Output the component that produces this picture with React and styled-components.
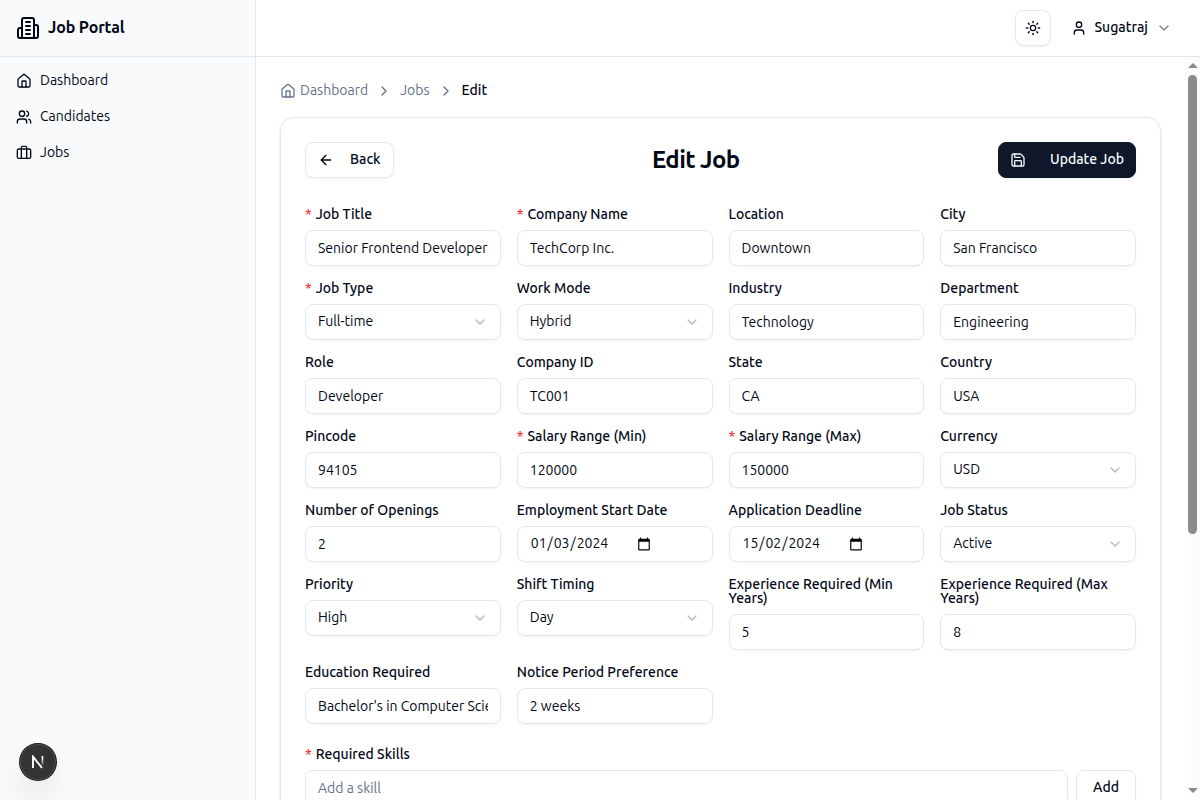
import React from "react";
import styled, { createGlobalStyle, css } from "styled-components";
import {
  House, Users, Briefcase, Sun, User, ChevronDown, ChevronRight, ArrowLeft, Save,
} from "lucide-react";

const line = "#e2e8f0";
const ink = "#020817";
const muted = "#64748b";

const GlobalStyle = createGlobalStyle`
  *, *::before, *::after { box-sizing: border-box; }
  body {
    margin: 0;
    overflow: hidden;
    background: #fff;
    color: ${ink};
    font-family: Ubuntu, "Noto Sans", sans-serif;
    font-size: 14px;
    line-height: 20px;
  }
`;

const Shell = styled.div`
  display: grid;
  grid-template-columns: 256px minmax(0, 1fr);
  height: 800px;
  overflow: hidden;
`;

const Sidebar = styled.aside`
  border-right: 1px solid ${line};
  background: #f8fafc;
`;

const Brand = styled.div`
  display: flex;
  align-items: center;
  gap: 8px;
  height: 57px;
  padding: 0 16px;
  border-bottom: 1px solid ${line};
  font-size: 16px;
  font-weight: 600;
  letter-spacing: -0.12px;
  line-height: 24px;
`;

const Nav = styled.nav`
  display: flex;
  flex-direction: column;
  gap: 4px;
  padding: 8px;
`;

const NavItem = styled.a`
  display: flex;
  align-items: center;
  gap: 8px;
  height: 32px;
  padding: 0 8px;
`;

const Content = styled.div`
  display: flex;
  flex-direction: column;
  min-width: 0;
  min-height: 0;
`;

const Topbar = styled.header`
  display: flex;
  flex: none;
  align-items: center;
  justify-content: flex-end;
  gap: 8px;
  height: 57px;
  padding: 0 16px;
  border-bottom: 1px solid ${line};
`;

const buttonBase = css`
  display: flex;
  align-items: center;
  justify-content: center;
  height: 36px;
  padding: 0 12px;
  border: 1px solid ${line};
  border-radius: 8px;
  background: #fff;
  color: ${ink};
  font: inherit;
  font-weight: 500;
  box-shadow: 0 1px 2px rgba(0, 0, 0, 0.05);
`;

const IconButton = styled.button`
  ${buttonBase}
  width: 36px;
  padding: 0;
`;

const UserMenu = styled.button`
  ${buttonBase}
  gap: 8px;
  border-width: 0;
  box-shadow: none;
`;

const Scroller = styled.div`
  display: flex;
  flex: 1;
  min-height: 0;
`;

const Page = styled.main`
  flex: 1;
  min-width: 0;
  padding: 24px;
  overflow: hidden;
`;

const Breadcrumb = styled.nav`
  display: flex;
  align-items: center;
  height: 20px;
  margin-bottom: 16px;
  color: ${muted};
`;

const Crumb = styled.a`
  display: flex;
  align-items: center;
  gap: 4px;
  color: ${(p) => (p.$current ? ink : muted)};
  font-weight: ${(p) => (p.$current ? 500 : 400)};
`;

const Separator = styled(ChevronRight)`
  margin: 0 8px;
`;

const Card = styled.section`
  height: 1100px;
  padding: 24px;
  border: 1px solid ${line};
  border-radius: 14px;
  box-shadow: 0 1px 3px rgba(0, 0, 0, 0.1), 0 1px 2px -1px rgba(0, 0, 0, 0.1);
`;

const CardHeader = styled.div`
  display: flex;
  align-items: center;
  justify-content: space-between;
  margin-bottom: 29px;
`;

const Title = styled.h1`
  margin: 0;
  font-size: 24px;
  font-weight: 600;
  letter-spacing: -0.6px;
  line-height: 32px;
`;

const BackButton = styled.button`
  ${buttonBase}
  gap: 16px;
`;

const PrimaryButton = styled.button`
  ${buttonBase}
  gap: 24px;
  padding: 0 11px;
  border-color: #0f172a;
  background: #0f172a;
  color: #f8fafc;
`;

const FormGrid = styled.div`
  display: grid;
  grid-template-columns: repeat(4, minmax(0, 1fr));
  align-items: start;
  gap: 15px 16px;
`;

const Field = styled.div`
  display: flex;
  flex-direction: column;
  gap: 9px;
`;

const Label = styled.label`
  font-weight: 500;
  line-height: 14px;
`;

const Star = styled.span`
  margin-right: 0.6px;
  color: #fb2c36;
`;

const Control = styled.div`
  display: flex;
  align-items: center;
  justify-content: space-between;
  height: 36px;
  padding: 0 12px;
  border: 1px solid ${line};
  border-radius: 8px;
  color: ${(p) => (p.$placeholder ? muted : ink)};
  box-shadow: 0 1px 2px rgba(0, 0, 0, 0.05);
`;

const Value = styled.span`
  overflow: hidden;
  white-space: nowrap;
`;

const Caption = styled.span`
  padding-bottom: 2px;
  white-space: nowrap;
`;

const DateValue = styled.span`
  display: flex;
  align-items: center;
  gap: 1px;
  padding-left: 1px;
`;

const DateIcon = styled.svg`
  margin-left: 28px;
`;

const SelectChevron = styled(ChevronDown)`
  flex: none;
  color: ${muted};
  opacity: 0.5;
`;

const MenuChevron = styled(ChevronDown)`
  flex: none;
  opacity: 0.5;
`;

const Skills = styled.div`
  display: flex;
  flex-direction: column;
  gap: 9px;
  margin-top: 23px;
`;

const SkillRow = styled.div`
  display: grid;
  grid-template-columns: minmax(0, 1fr) 60px;
  gap: 8px;
`;

const AddButton = styled.button`
  ${buttonBase}
`;

const Scrollbar = styled.div`
  display: flex;
  flex: none;
  flex-direction: column;
  align-items: center;
  justify-content: space-between;
  width: 15px;
  padding: 6px 0 7px;
  background: #fcfcfc;
`;

const Thumb = styled.div`
  width: 9px;
  height: 459px;
  margin: 7px 0 auto;
  border-radius: 5px;
  background: #8b8b8b;
`;

const DevBadge = styled.div`
  position: fixed;
  left: 20px;
  bottom: 20px;
  display: flex;
  align-items: center;
  justify-content: center;
  width: 36px;
  height: 36px;
  border-radius: 50%;
  background: #333;
  box-shadow: 0 0 0 1px #171717, inset 0 0 0 1px rgba(255, 255, 255, 0.14),
    0 16px 32px -8px rgba(0, 0, 0, 0.24);
`;

const fields = [
  { label: "Job Title", value: "Senior Frontend Developer", required: true },
  { label: "Company Name", value: "TechCorp Inc.", required: true },
  { label: "Location", value: "Downtown" },
  { label: "City", value: "San Francisco" },
  { label: "Job Type", value: "Full-time", required: true, kind: "select" },
  { label: "Work Mode", value: "Hybrid", kind: "select" },
  { label: "Industry", value: "Technology" },
  { label: "Department", value: "Engineering" },
  { label: "Role", value: "Developer" },
  { label: "Company ID", value: "TC001" },
  { label: "State", value: "CA" },
  { label: "Country", value: "USA" },
  { label: "Pincode", value: "94105" },
  { label: "Salary Range (Min)", value: "120000", required: true },
  { label: "Salary Range (Max)", value: "150000", required: true },
  { label: "Currency", value: "USD", kind: "select" },
  { label: "Number of Openings", value: "2" },
  { label: "Employment Start Date", value: "01/03/2024", kind: "date" },
  { label: "Application Deadline", value: "15/02/2024", kind: "date" },
  { label: "Job Status", value: "Active", kind: "select" },
  { label: "Priority", value: "High", kind: "select" },
  { label: "Shift Timing", value: "Day", kind: "select" },
  { label: "Experience Required (Min Years)", value: "5" },
  { label: "Experience Required (Max Years)", value: "8" },
  { label: "Education Required", value: "Bachelor's in Computer Science" },
  { label: "Notice Period Preference", value: "2 weeks" },
];

const BuildingIcon = () => (
  <svg width="24" height="24" viewBox="0 0 24 24" fill="none" stroke="currentColor" strokeWidth="2" strokeLinecap="round" strokeLinejoin="round">
    <path d="M6 22V4a2 2 0 0 1 2-2h8a2 2 0 0 1 2 2v18Z" />
    <path d="M6 12H4a2 2 0 0 0-2 2v6a2 2 0 0 0 2 2h2" />
    <path d="M18 9h2a2 2 0 0 1 2 2v9a2 2 0 0 1-2 2h-2" />
    <path d="M10 6h4M10 10h4M10 14h4M10 18h4" />
  </svg>
);

const CalendarIcon = () => (
  <DateIcon width="14" height="14" viewBox="0 0 24 24" fill="#000">
    <path d="M20 3h-1V1h-2v2H7V1H5v2H4c-1.1 0-2 .9-2 2v16c0 1.1.9 2 2 2h16c1.1 0 2-.9 2-2V5c0-1.1-.9-2-2-2zm0 18H4V8h16v13z" />
  </DateIcon>
);

const Arrow = ({ down }) => (
  <svg width="10" height="5" viewBox="0 0 10 5" fill="#8b8b8b">
    <path d={down ? "M0 0h10L5 5z" : "M0 5h10L5 0z"} />
  </svg>
);

function FieldControl({ kind, value }) {
  if (kind === "select") {
    return (
      <Control>
        <Caption>{value}</Caption>
        <SelectChevron size={16} />
      </Control>
    );
  }
  if (kind === "date") {
    const [day, month, year] = value.split("/");
    return (
      <Control>
        <DateValue>
          <Caption>{day}</Caption>
          <Caption>/</Caption>
          <Caption>{month}</Caption>
          <Caption>/</Caption>
          <Caption>{year}</Caption>
          <CalendarIcon />
        </DateValue>
      </Control>
    );
  }
  return (
    <Control>
      <Value>{value}</Value>
    </Control>
  );
}

export default function App() {
  return (
    <>
      <GlobalStyle />
      <Shell>
        <Sidebar>
          <Brand>
            <BuildingIcon />
            <Caption>Job Portal</Caption>
          </Brand>
          <Nav>
            <NavItem><House size={16} /><Caption>Dashboard</Caption></NavItem>
            <NavItem><Users size={16} /><Caption>Candidates</Caption></NavItem>
            <NavItem><Briefcase size={16} /><Caption>Jobs</Caption></NavItem>
          </Nav>
        </Sidebar>
        <Content>
          <Topbar>
            <IconButton><Sun size={16} /></IconButton>
            <UserMenu>
              <User size={16} />
              <Caption>Sugatraj</Caption>
              <MenuChevron size={16} />
            </UserMenu>
          </Topbar>
          <Scroller>
            <Page>
              <Breadcrumb>
                <Crumb><House size={16} /><Caption>Dashboard</Caption></Crumb>
                <Separator size={16} />
                <Crumb><Caption>Jobs</Caption></Crumb>
                <Separator size={16} />
                <Crumb $current><Caption>Edit</Caption></Crumb>
              </Breadcrumb>
              <Card>
                <CardHeader>
                  <BackButton><ArrowLeft size={16} /><Caption>Back</Caption></BackButton>
                  <Title>Edit Job</Title>
                  <PrimaryButton><Save size={16} /><Caption>Update Job</Caption></PrimaryButton>
                </CardHeader>
                <FormGrid>
                  {fields.map((f) => (
                    <Field key={f.label}>
                      <Label>{f.required && <Star>* </Star>}{f.label}</Label>
                      <FieldControl kind={f.kind} value={f.value} />
                    </Field>
                  ))}
                </FormGrid>
                <Skills>
                  <Label><Star>* </Star>Required Skills</Label>
                  <SkillRow>
                    <Control $placeholder>Add a skill</Control>
                    <AddButton><Caption>Add</Caption></AddButton>
                  </SkillRow>
                </Skills>
              </Card>
            </Page>
            <Scrollbar>
              <Arrow />
              <Thumb />
              <Arrow down />
            </Scrollbar>
          </Scroller>
        </Content>
      </Shell>
      <DevBadge>
        <svg width="14" height="14" viewBox="0 0 14 14" fill="none" strokeWidth="1.9">
          <defs>
            <linearGradient id="fade" x1="0" y1="0" x2="0" y2="1">
              <stop offset="0.2" stopColor="#fff" />
              <stop offset="1" stopColor="#fff" stopOpacity="0.15" />
            </linearGradient>
          </defs>
          <path d="M2 13V1.6L11 13" stroke="#fff" />
          <path d="M10.6 1h1.7v9.5h-1.7z" fill="url(#fade)" />
        </svg>
      </DevBadge>
    </>
  );
}
